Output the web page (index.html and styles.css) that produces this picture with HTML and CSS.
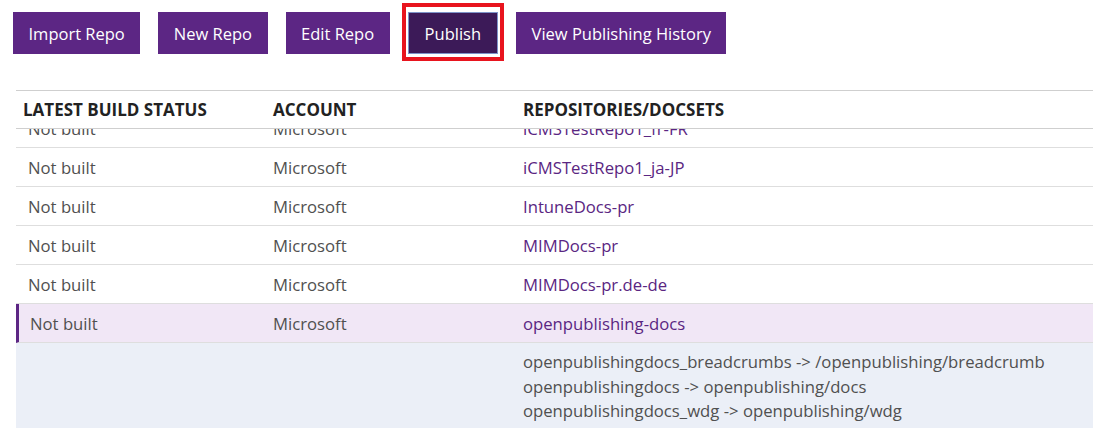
FILE: index.html
```html
<!DOCTYPE html>
<html>
<head>
<meta charset="utf-8">
<link rel="stylesheet" href="styles.css">
</head>
<body>
<div class="toolbar">
  <button class="btn">Import Repo</button>
  <button class="btn">New Repo</button>
  <button class="btn">Edit Repo</button>
  <button class="btn btn-active">Publish</button>
  <button class="btn">View Publishing History</button>
</div>
<div class="table">
  <div class="head row">
    <div class="c1">LATEST BUILD STATUS</div>
    <div class="c2">ACCOUNT</div>
    <div class="c3">REPOSITORIES/DOCSETS</div>
  </div>
  <div class="body">
    <div class="rows">
      <div class="row item"><div class="c1">Not built</div><div class="c2">Microsoft</div><div class="c3"><a>iCMSTestRepo1_fr-FR</a></div></div>
      <div class="row item"><div class="c1">Not built</div><div class="c2">Microsoft</div><div class="c3"><a>iCMSTestRepo1_ja-JP</a></div></div>
      <div class="row item"><div class="c1">Not built</div><div class="c2">Microsoft</div><div class="c3"><a>IntuneDocs-pr</a></div></div>
      <div class="row item"><div class="c1">Not built</div><div class="c2">Microsoft</div><div class="c3"><a>MIMDocs-pr</a></div></div>
      <div class="row item"><div class="c1">Not built</div><div class="c2">Microsoft</div><div class="c3"><a>MIMDocs-pr.de-de</a></div></div>
      <div class="row item selected"><div class="c1">Not built</div><div class="c2">Microsoft</div><div class="c3"><a>openpublishing-docs</a></div></div>
      <div class="row detail">
        <div class="c1"></div><div class="c2"></div>
        <div class="c3">
          <div>openpublishingdocs_breadcrumbs -&gt; /openpublishing/breadcrumb</div>
          <div>openpublishingdocs -&gt; openpublishing/docs</div>
          <div>openpublishingdocs_wdg -&gt; openpublishing/wdg</div>
        </div>
      </div>
    </div>
  </div>
</div>
</body>
</html>
```
FILE: styles.css
```css
html, body { margin: 0; padding: 0; background: #fff; overflow: hidden; }
body { font-family: "Open Sans", "Noto Sans", sans-serif; color: #505050; width: 1093px; height: 428px; }

.toolbar { display: flex; gap: 18px; padding: 12px 0 0 13px; height: 42px; }
.btn {
  font-family: inherit; font-size: 16.5px; color: #fff;
  background: #5c2684; border: 1px solid #5c2684;
  height: 42px; padding: 0 14.5px; cursor: pointer;
}
.btn-active { position: relative; background: #3c1a58; border-color: #7d93c9; padding: 0 16px; }
.btn-active::after {
  content: ""; position: absolute; left: -7px; right: -7px; top: -10px; bottom: -8px;
  border: 4px solid #e8141e;
}

.table { margin: 36px 0 0 16px; border-top: 1px solid #cfcfcf; width: 1077px; }
.row { display: grid; grid-template-columns: 245px 250px 1fr; align-items: center; }
.row > div { padding-left: 12px; }
.head { height: 37px; border-bottom: 1px solid #cfcfcf; color: #222; font-weight: 700; font-size: 17px; }
.head .c1 { padding-left: 7px; }
.body { height: 300px; overflow: hidden; }
.rows { margin-top: -20px; }
.item { height: 38px; border-bottom: 1px solid #dedede; font-size: 16.7px; }
a { color: #5a2682; text-decoration: none; }
.selected { background: #f1e7f6; border-left: 3px solid #5c2684; grid-template-columns: 242px 250px 1fr; }
.selected .c1 { padding-left: 11px; }
.detail { background: #ebeff7; align-items: start; padding: 7px 0 20px; font-size: 16.7px; line-height: 24.5px; }
```
